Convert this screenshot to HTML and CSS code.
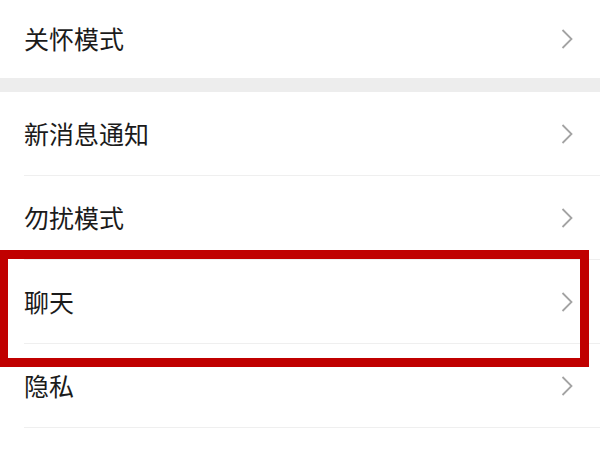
FILE: index.html
```html
<!DOCTYPE html>
<html lang="zh">
<head>
<meta charset="utf-8">
<link rel="stylesheet" href="styles.css">
</head>
<body>
<div class="page">
  <div class="group first">
    <div class="row"><span class="label">关怀模式</span><svg class="chev" viewBox="0 0 12 20" width="12" height="20"><polyline points="1.5,1 10.5,10 1.5,19" /></svg></div>
  </div>
  <div class="band"></div>
  <div class="group">
    <div class="row"><span class="label">新消息通知</span><svg class="chev" viewBox="0 0 12 20" width="12" height="20"><polyline points="1.5,1 10.5,10 1.5,19" /></svg></div>
    <div class="row"><span class="label">勿扰模式</span><svg class="chev" viewBox="0 0 12 20" width="12" height="20"><polyline points="1.5,1 10.5,10 1.5,19" /></svg></div>
    <div class="row"><span class="label">聊天</span><svg class="chev" viewBox="0 0 12 20" width="12" height="20"><polyline points="1.5,1 10.5,10 1.5,19" /></svg></div>
    <div class="row"><span class="label">隐私</span><svg class="chev" viewBox="0 0 12 20" width="12" height="20"><polyline points="1.5,1 10.5,10 1.5,19" /></svg></div>
  </div>
  <div class="highlight"></div>
</div>
</body>
</html>
```
FILE: styles.css
```css
html, body {
  margin: 0;
  padding: 0;
  background: #ffffff;
}
.page {
  position: relative;
  width: 600px;
  height: 449px;
  overflow: hidden;
  font-family: "Noto Sans CJK SC", "Noto Sans", sans-serif;
  color: #1b1b1b;
}
.group .row {
  display: flex;
  align-items: center;
  justify-content: space-between;
  height: 83px;
  margin-left: 24px;
  padding-right: 27px;
  border-bottom: 1px solid #efefef;
  box-sizing: content-box;
}
.group.first .row {
  height: 77px;
  padding-bottom: 1px;
  border-bottom: none;
}
.label {
  font-size: 25px;
  line-height: 1;
}
.chev {
  display: block;
  fill: none;
  stroke: #a3a3a3;
  stroke-width: 1.8;
}
.band {
  height: 14px;
  background: #ededed;
}
.highlight {
  position: absolute;
  left: 0;
  top: 250px;
  width: 589px;
  height: 117px;
  box-sizing: border-box;
  border: 9px solid #c00000;
  border-left-width: 8px;
}
```
